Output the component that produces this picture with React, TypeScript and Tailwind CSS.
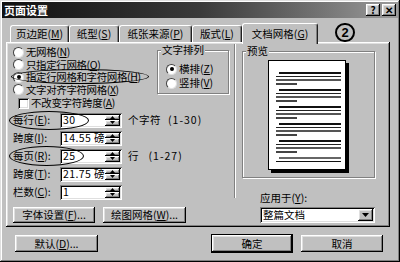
import React from "react";

const raised =
  "bg-[#c0c0c0] shadow-[inset_-1px_-1px_#000,inset_1px_1px_#fff,inset_-2px_-2px_#808080,inset_2px_2px_#dfdfdf]";
const sunken =
  "bg-white shadow-[inset_1px_1px_#808080,inset_-1px_-1px_#fff,inset_2px_2px_#000,inset_-2px_-2px_#dfdfdf]";

function U({ c }: { c: string }) {
  return <span className="underline underline-offset-[1px]">{c}</span>;
}

function Radio({ checked }: { checked?: boolean }) {
  return (
    <span className="w-[11px] h-[11px] shrink-0 rounded-full bg-white border border-[#404040] border-b-[#e0e0e0] border-r-[#e0e0e0] flex items-center justify-center">
      {checked && <span className="w-[4px] h-[4px] rounded-full bg-black" />}
    </span>
  );
}

function Group({ title, className, children }: { title: string; className: string; children?: React.ReactNode }) {
  return (
    <div className={`relative border border-[#808080] shadow-[inset_1px_1px_#fff,1px_1px_#fff] ${className}`}>
      <span className="absolute -top-[7px] left-[3px] px-[1px] bg-[#c0c0c0] leading-[12px]">{title}</span>
      {children}
    </div>
  );
}

function Spin() {
  return (
    <div className="flex flex-col w-[15px] h-[11px] shrink-0">
      <div className={`flex-1 flex items-center justify-center ${raised}`}>
        <svg width="5" height="3" viewBox="0 0 5 3"><path d="M0 3L2.5 0L5 3Z" fill="#000" /></svg>
      </div>
      <div className={`flex-1 flex items-center justify-center ${raised}`}>
        <svg width="5" height="3" viewBox="0 0 5 3"><path d="M0 0L5 0L2.5 3Z" fill="#000" /></svg>
      </div>
    </div>
  );
}

function Field({ label, u, value, after }: { label: string; u: string; value: string; after?: React.ReactNode }) {
  return (
    <div className="flex items-center h-[18px]">
      <span className="w-[47px] whitespace-nowrap">
        {label}(<U c={u} />):
      </span>
      <div className={`w-[62px] h-[15px] flex items-center pl-[3px] pr-[2px] ${sunken}`}>
        <span className="flex-1 whitespace-nowrap tracking-[0.4px]">{value}</span>
        <Spin />
      </div>
      {after}
    </div>
  );
}

function Tab({ children, w, active }: { children: React.ReactNode; w: string; active?: boolean }) {
  return (
    <div
      className={`${w} flex items-center justify-center whitespace-nowrap rounded-t-[3px] border-t border-l border-white border-r border-r-[#202020] shadow-[inset_-1px_0_#808080] ${
        active ? "relative z-10 h-[21px] -mb-[2px] bg-[#c0c0c0]" : "h-[17px]"
      }`}
    >
      {children}
    </div>
  );
}

function Btn({ w, children, def }: { w: string; children: React.ReactNode; def?: boolean }) {
  return (
    <div className={`${w} h-full flex items-center justify-center whitespace-nowrap ${raised} ${def ? "outline outline-1 outline-black" : ""}`}>
      {children}
    </div>
  );
}

function RadioRow({ checked, children }: { checked?: boolean; children: React.ReactNode }) {
  return (
    <div className="h-[12.5px] flex items-center gap-[2px] whitespace-nowrap">
      <Radio checked={checked} />
      <span className="tracking-[-0.4px]">{children}</span>
    </div>
  );
}

export default function App() {
  const rows = [0, 1, 2, 3, 4];
  return (
    <div className="relative w-[400px] h-[262px] p-[2px] flex flex-col bg-[#c0c0c0] text-[10.5px] leading-[12px] text-black font-['Noto_Sans_CJK_SC','Noto_Sans',sans-serif] shadow-[inset_-1px_-1px_#000,inset_1px_1px_#dfdfdf,inset_-2px_-2px_#808080,inset_2px_2px_#fff]">
      {/* Title bar */}
      <div className="h-[16px] flex items-center pl-[2px] pr-[2px] bg-gradient-to-r from-[#111] via-[#3a3a3a] to-[#9c9c9c]">
        <span className="text-white font-bold text-[11px]">页面设置</span>
        <div className="ml-auto flex gap-[2px]">
          <div className={`w-[14px] h-[12px] flex items-center justify-center font-bold text-[10px] leading-none ${raised}`}>?</div>
          <div className={`w-[14px] h-[12px] flex items-center justify-center font-bold text-[10px] leading-none ${raised}`}>✕</div>
        </div>
      </div>

      {/* Tabs */}
      <div className="mt-[5px] h-[19px] pl-[8px] flex items-end">
        <Tab w="w-[59px]">页边距(<U c="M" />)</Tab>
        <Tab w="w-[50px]">纸型(<U c="S" />)</Tab>
        <Tab w="w-[73px]">纸张来源(<U c="P" />)</Tab>
        <Tab w="w-[50px]">版式(<U c="L" />)</Tab>
        <Tab w="w-[76px]" active>
          文档网格(<U c="G" />)
        </Tab>
      </div>

      {/* Panel */}
      <div className="ml-[4px] w-[384px] h-[185px] pt-[2px] flex bg-[#c0c0c0] shadow-[inset_-1px_-1px_#000,inset_1px_1px_#fff,inset_-2px_-2px_#808080,inset_2px_2px_#dfdfdf]">
        <div className="w-[228px] pl-[7px] pt-[2px] flex flex-col">
          <div className="flex">
            <div className="w-[144px] flex flex-col">
              <RadioRow>
                无网格(<U c="N" />)
              </RadioRow>
              <RadioRow>
                只指定行网格(<U c="O" />)
              </RadioRow>
              <RadioRow checked>
                指定行网格和字符网格(<U c="H" />)
              </RadioRow>
              <RadioRow>
                文字对齐字符网格(<U c="X" />)
              </RadioRow>
            </div>
            <Group title="文字排列" className="mt-[4px] w-[72px] h-[44px] pt-[11px] pl-[8px]">
              <div className="h-[14px] flex items-center gap-[2px]">
                <Radio checked />
                <span>
                  横排(<U c="Z" />)
                </span>
              </div>
              <div className="h-[14px] flex items-center gap-[2px]">
                <Radio />
                <span>
                  竖排(<U c="V" />)
                </span>
              </div>
            </Group>
          </div>

          <div className="mt-[1px] h-[12px] flex items-center pl-[5px] gap-[2px]">
            <span className={`w-[11px] h-[11px] ${sunken}`} />
            <span className="tracking-[-0.3px]">
              不改变字符跨度(<U c="A" />)
            </span>
          </div>

          <div className="mt-[2px] flex flex-col">
            <Field
              label="每行"
              u="E"
              value="30"
              after={
                <>
                  <span className="ml-[6px] tracking-[0.5px]">个字符</span>
                  <span className="ml-[7px] tracking-[1px]">(1-30)</span>
                </>
              }
            />
            <Field label="跨度" u="I" value="14.55 磅" />
            <Field
              label="每页"
              u="R"
              value="25"
              after={
                <>
                  <span className="ml-[6px]">行</span>
                  <span className="ml-[10px] tracking-[1px]">(1-27)</span>
                </>
              }
            />
            <Field label="跨度" u="T" value="21.75 磅" />
            <Field label="栏数" u="C" value="1" />
          </div>

          <div className="mt-[6px] h-[16px] flex gap-[8px]">
            <Btn w="w-[82px]">
              字体设置(<U c="F" />)...
            </Btn>
            <Btn w="w-[83px]">
              绘图网格(<U c="W" />)...
            </Btn>
          </div>
        </div>

        <div className="w-[2px] h-[154px] border-l border-[#808080] border-r border-r-white" />

        <div className="flex-1 flex flex-col">
          <Group title="预览" className="mt-[7px] ml-[6px] w-[133px] h-[127px] pt-[8px] pl-[25px]">
            <div className="w-[78px] h-[110px] bg-white border border-black shadow-[3px_3px_0_#000] overflow-hidden pt-[11px] pl-[7px] pr-[4px] flex flex-col gap-[4.5px]">
              {rows.map((r) => (
                <div key={r} className="flex flex-col">
                  <div className="h-[1.5px] ml-[3px] bg-[#111]" />
                  <div className="h-[1.5px] mt-[2px] bg-[#222]" />
                  <div className="h-[1.5px] mt-[2px] bg-[#555]" />
                  <div className="h-[1.5px] mt-[2.5px] w-[21px] bg-[#444]" />
                </div>
              ))}
              <div className="flex flex-col">
                <div className="h-[1.5px] ml-[3px] bg-[#666]" />
                <div className="h-[1.5px] mt-[2px] bg-[#111]" />
              </div>
            </div>
          </Group>
          <div className="mt-[14px] ml-[24px] h-[12px]">
            应用于(<U c="Y" />):
          </div>
          <div className={`mt-[3px] ml-[24px] w-[115px] h-[16px] flex items-center pl-[3px] pr-[2px] ${sunken}`}>
            <span className="flex-1">整篇文档</span>
            <div className={`w-[15px] h-[12px] flex items-center justify-center ${raised}`}>
              <svg width="7" height="4" viewBox="0 0 7 4"><path d="M0 0L7 0L3.5 4Z" fill="#000" /></svg>
            </div>
          </div>
        </div>
      </div>

      {/* Bottom buttons */}
      <div className="mt-[8px] h-[17px] pl-[13px] pr-[15px] flex">
        <Btn w="w-[83px]">
          默认(<U c="D" />)...
        </Btn>
        <div className="ml-auto flex gap-[9px] h-full">
          <Btn w="w-[80px]" def>
            确定
          </Btn>
          <Btn w="w-[82px]">取消</Btn>
        </div>
      </div>

      {/* Hand-drawn annotations */}
      <div className="absolute left-[11px] top-[69px] w-[138px] h-[15px] rounded-[50%] border-[1.5px] border-black" />
      <div className="absolute left-[9px] top-[111px] w-[80px] h-[19px] rounded-[50%] border-[1.5px] border-black" />
      <div className="absolute left-[9px] top-[146px] w-[75px] h-[20px] rounded-[50%] border-[1.5px] border-black" />
      <div className="absolute left-[335px] top-[23px] w-[20px] h-[19px] rounded-full border-2 border-black flex items-center justify-center font-bold text-[13px] font-['Liberation_Sans',sans-serif]">
        2
      </div>
    </div>
  );
}
